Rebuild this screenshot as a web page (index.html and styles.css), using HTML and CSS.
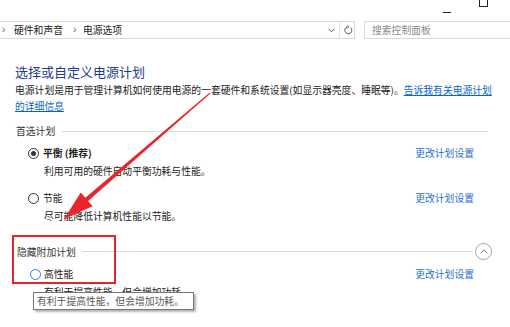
FILE: index.html
```html
<!DOCTYPE html>
<html lang="zh-CN">
<head>
  <meta charset="UTF-8" />
  <title>电源选项</title>
  <link rel="stylesheet" href="styles.css">
</head>
<body>

<!-- Window controls -->
<div class="titlebar">
  <span class="win-min"></span>
  <span class="win-max"></span>
</div>

<!-- Address + search -->
<div class="navbar">
  <div class="address">
    <span class="crumb-sep first">›</span>
    <span>硬件和声音</span>
    <span class="crumb-sep">›</span>
    <span>电源选项</span>
    <svg class="drop" width="7" height="5" viewBox="0 0 7 5"><polyline points="0.5,0.8 3.5,3.8 6.5,0.8" fill="none" stroke="#555" stroke-width="1"/></svg>
    <span class="divider"></span>
    <svg class="refresh" width="9" height="10" viewBox="0 0 9 10"><path d="M6.6 2.6 A3.5 3.5 0 1 1 3.4 1.9" fill="none" stroke="#555" stroke-width="1"/><polyline points="3.1,0.3 4.6,1.9 3.1,3.4" fill="none" stroke="#555" stroke-width="1"/></svg>
  </div>
  <div class="search">搜索控制面板</div>
</div>

<!-- Main panel -->
<div class="content">
  <h1>选择或自定义电源计划</h1>
  <p class="intro">电源计划是用于管理计算机如何使用电源的一套硬件和系统设置(如显示器亮度、睡眠等)。<a href="#">告诉我有关电源计划的详细信息</a></p>

  <div class="group-head first">
    <span>首选计划</span>
    <span class="rule"></span>
  </div>

  <div class="plan first">
    <div class="plan-row">
      <span class="plan-name"><span class="radio checked"></span><b>平衡 (推荐)</b></span>
      <a class="plan-link" href="#">更改计划设置</a>
    </div>
    <div class="plan-desc">利用可用的硬件自动平衡功耗与性能。</div>
  </div>

  <div class="plan">
    <div class="plan-row">
      <span class="plan-name"><span class="radio"></span>节能</span>
      <a class="plan-link" href="#">更改计划设置</a>
    </div>
    <div class="plan-desc">尽可能降低计算机性能以节能。</div>
  </div>

  <div class="group-head hidden-plans">
    <span>隐藏附加计划</span>
    <span class="rule"></span>
    <span class="collapse"><svg width="8" height="5" viewBox="0 0 8 5"><polyline points="0.5,4.3 4,0.8 7.5,4.3" fill="none" stroke="#6f6f6f" stroke-width="1"/></svg></span>
  </div>

  <div class="plan extra">
    <div class="plan-row">
      <span class="plan-name hover"><span class="radio focus"></span>高性能</span>
      <a class="plan-link" href="#">更改计划设置</a>
    </div>
    <div class="plan-desc">有利于提高性能，但会增加功耗。</div>
  </div>
</div>

<!-- Annotations drawn over the page -->
<div class="highlight"></div>
<svg class="arrow" width="510" height="327" viewBox="0 0 510 327">
  <polygon points="210.3,93.4 88.1,201.1 92.6,206.2 64,219 80.8,192.6 85.3,197.7 209.7,92.6" fill="#e8262b"/>
</svg>
<div class="tooltip">有利于提高性能，但会增加功耗。</div>

</body>
</html>
```

FILE: styles.css
```css
* { box-sizing: border-box; }
body {
  margin: 0;
  width: 510px;
  height: 327px;
  overflow: hidden;
  position: relative;
  background-color: #fff;
  font-family: "Noto Sans CJK SC", sans-serif;
  font-size: 9.8px;
  color: #222;
}

/* window controls */
.titlebar {
  height: 21px;
  display: flex;
  justify-content: flex-end;
  align-items: flex-start;
  gap: 28px;
  padding-right: 22px;
}
.win-min {
  width: 8px;
  height: 1px;
  margin-top: 12px;
  background-color: #222;
}
.win-max {
  width: 9px;
  height: 9px;
  margin-top: -2px;
  border: 1px solid #222;
}

/* address bar */
.navbar {
  display: flex;
  height: 18px;
}
.address {
  margin-left: -1px;
  width: 356px;
  border: 1px solid #d9d9d9;
  display: flex;
  align-items: center;
  line-height: 16px;
}
.crumb-sep {
  width: 4px;
  margin: 0 6px 0 10px;
  font-family: "Liberation Sans", sans-serif;
  font-size: 10px;
  color: #666;
}
.crumb-sep.first { margin: 0 8px 0 2px; }
.drop { margin-left: auto; }
.divider {
  width: 1px;
  height: 16px;
  margin: 0 4px;
  background-color: #e3e3e3;
}
.refresh { margin-right: 1px; }
.search {
  flex: 1;
  margin-left: 9px;
  margin-right: -2px;
  padding-left: 7px;
  border: 1px solid #d9d9d9;
  display: flex;
  align-items: center;
  color: #8a8a8a;
}

/* content */
.content { padding: 24px 18px 0 15px; }
h1 {
  margin: 0;
  font-size: 13px;
  line-height: 18px;
  font-weight: normal;
  color: #1f3b8f;
}
.intro {
  margin: 1px -5px 0 0;
  line-height: 16px;
}
a { color: #0a64c8; }

.group-head {
  display: flex;
  align-items: center;
  line-height: 16px;
  margin-top: 9px;
  padding-left: 1px;
  color: #333;
}
.group-head.first { margin-right: 4px; }
.group-head .rule {
  flex: 1;
  height: 1px;
  margin-left: 7px;
  background-color: #dadada;
}
.hidden-plans { margin-top: 18px; padding-left: 2px; }
.hidden-plans .rule { margin-left: 6px; }
.collapse {
  width: 17px;
  height: 17px;
  margin-left: 2px;
  border: 1px solid #a5a5a5;
  border-radius: 50%;
  display: flex;
  align-items: center;
  justify-content: center;
  padding-bottom: 1px;
}

.plan { margin-top: 9px; }
.plan.first { margin-top: 5px; }
.plan.extra { margin-top: 5px; }
.plan-row {
  display: flex;
  justify-content: space-between;
  align-items: center;
  line-height: 18px;
}
.plan-name {
  display: flex;
  align-items: center;
  gap: 4px;
  padding-left: 13px;
}
.plan-name.hover { padding-left: 15px; gap: 3px; }
.radio {
  width: 11px;
  height: 11px;
  border: 1px solid #333;
  border-radius: 50%;
  display: flex;
  align-items: center;
  justify-content: center;
}
.radio.checked::after {
  content: "";
  width: 5px;
  height: 5px;
  border-radius: 50%;
  background-color: #333;
}
.radio.focus { border-color: #3a7bd5; }
.plan-link {
  margin-right: 18px;
  color: #1f6fd0;
  text-decoration: none;
}
.plan-desc {
  padding-left: 29px;
  line-height: 18px;
}

/* annotations */
.highlight {
  position: absolute;
  left: 12px;
  top: 235px;
  width: 104px;
  height: 49px;
  border: 2px solid #e8242a;
}
.arrow {
  position: absolute;
  left: 0;
  top: 0;
  pointer-events: none;
}
.tooltip {
  position: absolute;
  left: 33px;
  top: 292px;
  width: 161px;
  height: 18px;
  padding-left: 3px;
  line-height: 16px;
  background-color: #fff;
  border: 1px solid #767676;
  box-shadow: 2px 2px 2px rgba(0,0,0,0.3);
  color: #575757;
}
```
